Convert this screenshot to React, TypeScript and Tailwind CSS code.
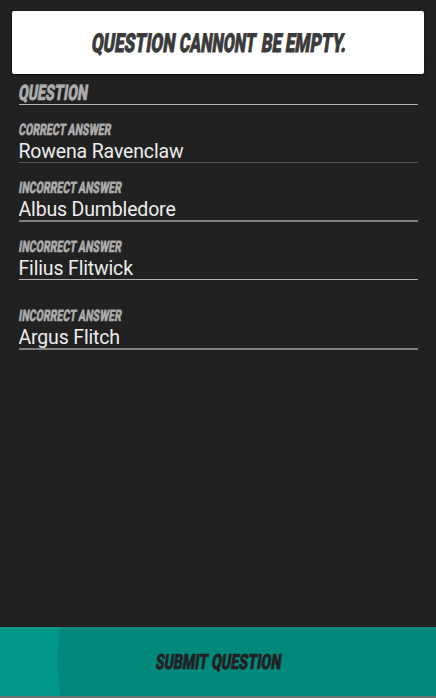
import React from "react";

const comic =
  "block w-max whitespace-nowrap origin-left font-['Roboto','Liberation_Sans',sans-serif] font-black uppercase";

function Comic({ text, className }: { text: string; className: string }) {
  return <span className={`${comic} ${className}`}>{text}</span>;
}

interface FieldProps {
  label: string;
  value: string;
  className: string;
}

function Field({ label, value, className }: FieldProps) {
  return (
    <label className={`flex flex-col ${className}`}>
      <Comic
        text={label}
        className="h-4 text-[16px] leading-4 text-[#adadad] [-webkit-text-stroke:0.4px_#adadad] [transform:scaleX(0.655)_skewX(-12deg)]"
      />
      <span className="mt-[2px] h-[22px] font-['Roboto',sans-serif] text-[19.5px] leading-6 tracking-[-0.16px] text-[#eeeeee]">
        {value}
      </span>
    </label>
  );
}

export default function App() {
  return (
    <main className="flex h-[698px] w-[436px] flex-col overflow-hidden bg-[#212121]">
      <div className="flex h-[58px] shrink-0 flex-col border-b border-[#1d1d1d] px-3 pt-[11px]">
        <div
          role="alert"
          className="relative z-10 h-[63px] shrink-0 rounded-[2px] bg-white pl-[80px] pt-[17px] shadow-[0_1px_3px_rgba(0,0,0,0.6)]"
        >
          <div className="flex h-[30px] text-[26px] leading-[30px] text-[#3a3a3a] [-webkit-text-stroke:0.8px_#3a3a3a]">
            <div className="w-[88px]"><Comic text="Question" className="[transform:scaleX(0.66)_skewX(-12deg)]" /></div>
            <div className="w-[82px]"><Comic text="Cannont" className="[transform:scaleX(0.615)_skewX(-12deg)]" /></div>
            <div className="w-6"><Comic text="Be" className="[transform:scaleX(0.64)_skewX(-12deg)]" /></div>
            <div className="w-[60px]"><Comic text="Empty." className="[transform:scaleX(0.66)_skewX(-12deg)]" /></div>
          </div>
        </div>
      </div>

      <form className="flex flex-1 flex-col px-[18.5px] pt-[22px]">
        <div className="h-[25px] border-b border-[#b3b3b3]">
          <Comic
            text="Question"
            className="h-6 text-[21.5px] leading-[26px] text-[#adadad] [-webkit-text-stroke:0.6px_#adadad] [transform:scaleX(0.66)_skewX(-12deg)]"
          />
        </div>
        <Field label="Correct Answer" value="Rowena Ravenclaw" className="mt-[17px] border-b border-[#555555]" />
        <Field label="Incorrect Answer" value="Albus Dumbledore" className="mt-[17px] border-b-2 border-[#808080]" />
        <Field label="Incorrect Answer" value="Filius Flitwick" className="mt-[17px] border-b border-[#b3b3b3]" />
        <Field label="Incorrect Answer" value="Argus Flitch" className="mt-7 border-b-2 border-[#808080]" />
      </form>

      <button
        type="button"
        className="flex h-[71px] shrink-0 border-b-2 border-[#6b7473] bg-[radial-gradient(circle_230px_at_287px_34px,#03897c_229px,#009688_230px)] pl-[156px] pt-[22px] text-left"
      >
        <span className="flex h-[26px] text-[21px] leading-[26px] text-[#212121] [-webkit-text-stroke:0.7px_#212121]">
          <span className="w-[56px]"><Comic text="Submit" className="[transform:scaleX(0.665)_skewX(-12deg)]" /></span>
          <span className="w-[70px]"><Comic text="Question" className="[transform:scaleX(0.68)_skewX(-12deg)]" /></span>
        </span>
      </button>
    </main>
  );
}
